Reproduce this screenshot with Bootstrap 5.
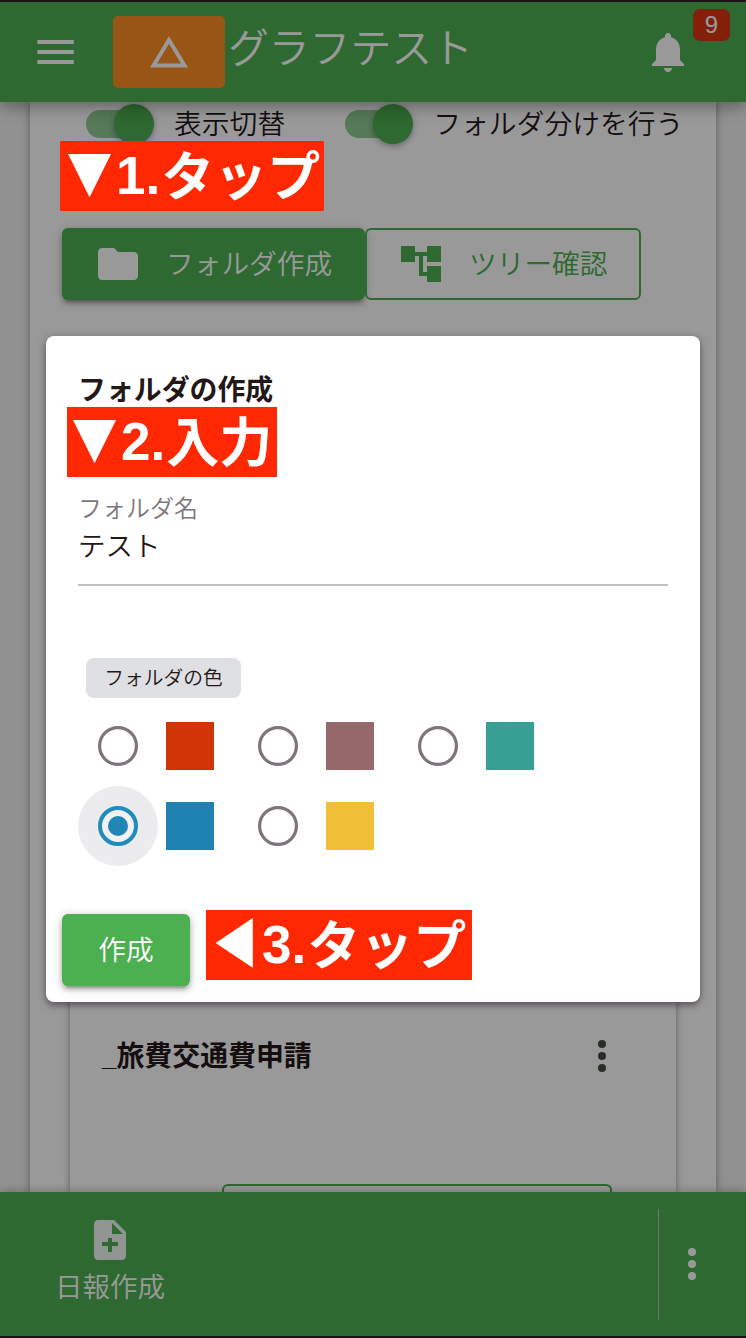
<!DOCTYPE html>
<html lang="ja">
<head>
<meta charset="utf-8">
<meta name="viewport" content="width=device-width, initial-scale=1">
<title>フォルダの作成</title>
<link href="https://cdn.jsdelivr.net/npm/bootstrap@5.3.0/dist/css/bootstrap.min.css" rel="stylesheet">
<style>
  :root { --brand: #4caf50; --shade: 0 2px 10px rgba(0,0,0,.25), 0 4px 4px rgba(0,0,0,.16), 0 6px 2px -4px rgba(0,0,0,.14); }
  body { font-family: "Liberation Sans", "Noto Sans CJK JP", sans-serif; font-size: 28px; line-height: 1.5; color: #231718; background: #f2f2f2; }
  .screen { height: 1338px; overflow: hidden; }
  .jp { font-family: "Noto Sans CJK JP", sans-serif; white-space: nowrap; }
  .thin { font-weight: 350; }
  svg { display: block; flex: none; }

  .topbar { height: 102px; background: var(--brand); border-top: 2px solid #2a2024; box-shadow: 0 4px 16px rgba(0,0,0,.38); z-index: 2; padding-left: 32px; }
  .logo-box { width: 112px; height: 72px; margin-left: 33px; border-radius: 5px; background: #ff8e26; }
  .app-title { font-size: 40.800px; font-weight: 350; margin: -13px 0 0 3px; }
  .bell-badge { top: 7px; right: 16px; width: 37px; height: 32px; border-radius: 7px; background: #dc3510; font: 24px/32px "Liberation Sans", sans-serif; text-align: center; }
  .bell { margin-right: 54px; }

  .sheet { margin: 0 30px; background: #fff; box-shadow: 0 0 8px rgba(0,0,0,.4); }
  .toggles { padding-left: 56px; height: 44px; }
  .toggles .jp { font-size: 27.800px; margin: -2px 0 0 20px; font-weight: 350; }
  .toggle { width: 68px; height: 40px; }
  .toggle + .jp + .toggle { margin-left: 60px; }
  .toggle::before { content: ""; position: absolute; left: 0; top: 6px; width: 60px; height: 28px; border-radius: 14px; background: #8fcb92; }
  .toggle::after { content: ""; position: absolute; right: 0; top: 0; width: 40px; height: 40px; border-radius: 50%; background: var(--brand); box-shadow: 0 2px 6px rgba(0,0,0,.35); }
  .act { height: 72px; border-radius: 6px; font-size: 27.700px; font-weight: 350; padding: 0 32px 2px; border: 0; }
  .act svg { position: relative; top: 1px; }
  .act-fill { background: var(--brand); color: #fff; box-shadow: var(--shade); }
  .act-fill.wide { width: 303px; }
  .act-line { width: 276px; padding: 0 30px 2px; color: var(--brand); border: 2px solid var(--brand); }
  .actions { margin: 82px 0 0 32px; }

  .entry { margin: 660px 40px 0; height: 232px; background: #fff; box-shadow: 0 0 7px rgba(0,0,0,.4); padding: 74px 64px 0 32px; }
  .entry b { font-size: 27.900px; }
  .entry b i { font: 700 26px "Liberation Sans", sans-serif; }
  .entry svg { position: relative; top: 1px; }
  .entry-btn { margin: 108px 0 0 120px; width: 390px; height: 60px; border: 2px solid var(--brand); border-radius: 6px; }

  .bottombar { height: 146px; background: var(--brand); border-bottom: 2px solid #2a2024; box-shadow: 0 -2px 8px rgba(0,0,0,.2); z-index: 2; color: #fff; }
  .bottombar .rule { width: 1px; height: 111px; background: #c9b9c9; margin-right: 9px; }
  .report { width: 220px; margin-top: -5px; }
  .report span { font-size: 27.500px; line-height: 44px; margin-top: -1px; }
  .more { margin-right: 30px; }

  .dimmer { inset: 0; background: rgba(0,0,0,.4); z-index: 5; }
  .dialog-box { top: 336px; left: 46px; width: 654px; height: 666px; z-index: 6; background: #fff; border-radius: 8px; padding: 31px 32px 16px; box-shadow: 0 2px 10px rgba(0,0,0,.3), 0 4px 4px rgba(60,30,60,.25); }
  .dialog-box h1 { font-size: 27.900px; font-weight: 700; line-height: 42px; margin: 0; }
  .field { margin-top: 80px; height: 97px; border-bottom: 2px solid #c0c0c0; }
  .field-label { font-size: 24px; line-height: 36px; color: #7d767d; font-weight: 350; }
  .field-value { font-size: 27.500px; line-height: 38px; font-weight: 350; }
  .color-tag { margin: 72px 0 0 8px; width: 155px; height: 40px; border-radius: 8px; background: #dfe0e4; font-size: 19.800px; line-height: 38px; font-weight: 350; }
  .choices { grid-template-columns: repeat(3, 160px); grid-auto-rows: 80px; margin-top: 8px; }
  .halo { width: 80px; height: 80px; border-radius: 50%; }
  .halo.on { background: #ececef; }
  .swatch { width: 48px; height: 48px; margin-left: 8px; }
  .create { width: 128px; margin: 48px 0 0 -16px; padding: 0 0 2px; }

  .callout-tag { z-index: 8; height: 70px; padding-left: 3px; background: #ff2802; color: #fff; font: 700 53px/70px "Liberation Sans", "Noto Sans CJK JP", sans-serif; white-space: nowrap; }
  .callout-tag .arrow { display: inline-block; width: 53px; font-family: "Noto Sans CJK JP", sans-serif; line-height: 1; transform: scaleX(.86); }
  .callout-tag .kana { position: relative; top: 2px; left: 1px; }
</style>
</head>
<body>
<div class="screen position-relative d-flex flex-column">
  <header class="topbar position-relative d-flex align-items-center text-white flex-shrink-0">
    <svg width="48" height="48" viewBox="0 0 24 24" fill="#fff"><path d="M2.700 6h18.200v2H2.700zM2.700 11h18.200v2H2.700zM2.700 16h18.200v2H2.700z"/></svg>
    <div class="logo-box d-flex align-items-center justify-content-center">
      <svg width="40" height="34" viewBox="0 0 40 34"><path d="M20 5 4.500 30.500h31z" fill="none" stroke="#fff" stroke-width="4"/></svg>
    </div>
    <div class="app-title jp">グラフテスト</div>
    <svg class="bell ms-auto" width="48" height="48" viewBox="0 0 24 24" fill="#fff"><path d="M12 22c1.100 0 2-.9 2-2h-4c0 1.100.9 2 2 2zm6-6v-5c0-3.070-1.630-5.640-4.500-6.320V4c0-.83-.67-1.500-1.500-1.500s-1.500.67-1.500 1.500v.68C7.640 5.360 6 7.920 6 11v5l-2 2v1h16v-1l-2-2z"/></svg>
    <span class="bell-badge position-absolute">9</span>
  </header>

  <main class="sheet flex-grow-1 overflow-hidden">
    <div class="toggles d-flex align-items-center">
      <span class="toggle position-relative"></span><span class="jp">表示切替</span>
      <span class="toggle position-relative"></span><span class="jp">フォルダ分けを行う</span>
    </div>
    <div class="actions d-flex">
      <button class="btn act act-fill wide jp d-flex align-items-center gap-4">
        <svg width="48" height="48" viewBox="0 0 24 24" fill="#fff"><path d="M10 4H4c-1.100 0-1.990.9-1.990 2L2 18c0 1.100.9 2 2 2h16c1.100 0 2-.9 2-2V8c0-1.100-.9-2-2-2h-8l-2-2z"/></svg>フォルダ作成
      </button>
      <button class="btn act act-line jp d-flex align-items-center gap-4">
        <svg width="48" height="48" viewBox="0 0 24 24" fill="#4caf50"><path d="M22 11V3h-7v3H9V3H2v8h7V8h2v10h4v3h7v-8h-7v3h-2V8h2v3z"/></svg>ツリー確認
      </button>
    </div>
    <section class="entry">
      <div class="d-flex align-items-center justify-content-between jp">
        <b><i>_</i>旅費交通費申請</b>
        <svg width="20" height="36" viewBox="0 0 20 36" fill="#444c43"><circle cx="10" cy="6" r="4"/><circle cx="10" cy="18" r="4"/><circle cx="10" cy="30" r="4"/></svg>
      </div>
      <div class="entry-btn"></div>
    </section>
  </main>

  <footer class="bottombar position-relative d-flex align-items-center flex-shrink-0">
    <div class="report d-flex flex-column align-items-center jp thin">
      <svg width="48" height="48" viewBox="0 0 24 24" fill="#fff" fill-opacity=".93"><path d="M14 2H6c-1.100 0-1.990.9-1.990 2L4 20c0 1.100.89 2 1.990 2H18c1.100 0 2-.9 2-2V8l-6-6zm2 13h-3v3h-2v-3H8v-2h3v-2h2v2h3v2zm-3-6V3.500L18.500 9H13z"/></svg>
      <span>日報作成</span>
    </div>
    <div class="rule ms-auto"></div>
    <svg width="48" height="48" viewBox="0 0 24 24" fill="#fff" class="more"><circle cx="12" cy="6" r="2"/><circle cx="12" cy="12" r="2"/><circle cx="12" cy="18" r="2"/></svg>
  </footer>

  <div class="dimmer position-absolute"></div>

  <section class="dialog-box position-absolute" role="dialog">
    <h1 class="jp">フォルダの作成</h1>
    <div class="field jp"><div class="field-label">フォルダ名</div><div class="field-value">テスト</div></div>
    <div class="color-tag jp text-center">フォルダの色</div>
    <div class="choices d-grid">
      <label class="d-flex align-items-center"><span class="halo d-flex align-items-center justify-content-center"><svg width="40" height="40"><circle cx="20" cy="20" r="18.400" fill="none" stroke="#7d747c" stroke-width="3.200"/></svg></span><span class="swatch" style="background:#d13405"></span></label>
      <label class="d-flex align-items-center"><span class="halo d-flex align-items-center justify-content-center"><svg width="40" height="40"><circle cx="20" cy="20" r="18.400" fill="none" stroke="#7d747c" stroke-width="3.200"/></svg></span><span class="swatch" style="background:#95686b"></span></label>
      <label class="d-flex align-items-center"><span class="halo d-flex align-items-center justify-content-center"><svg width="40" height="40"><circle cx="20" cy="20" r="18.400" fill="none" stroke="#7d747c" stroke-width="3.200"/></svg></span><span class="swatch" style="background:#379f94"></span></label>
      <label class="d-flex align-items-center"><span class="halo on d-flex align-items-center justify-content-center"><svg width="40" height="40"><circle cx="20" cy="20" r="18" fill="#f1f1f4" stroke="#208bbc" stroke-width="4"/><circle cx="20" cy="20" r="10" fill="#1f86b6"/></svg></span><span class="swatch" style="background:#1f83b2"></span></label>
      <label class="d-flex align-items-center"><span class="halo d-flex align-items-center justify-content-center"><svg width="40" height="40"><circle cx="20" cy="20" r="18.400" fill="none" stroke="#7d747c" stroke-width="3.200"/></svg></span><span class="swatch" style="background:#f1c037"></span></label>
    </div>
    <button class="btn act act-fill create jp">作成</button>
  </section>

  <div class="callout-tag position-absolute" style="left:60px;top:141px;width:264px"><span class="arrow">▼</span>1.<span class="kana">タップ</span></div>
  <div class="callout-tag position-absolute" style="left:67px;top:407px;width:210px;padding-left:1px"><span class="arrow">▼</span>2.<span class="kana">入力</span></div>
  <div class="callout-tag position-absolute" style="left:206px;top:910px;width:266px"><span class="arrow">◀</span>3.<span class="kana">タップ</span></div>
</div>
<script src="https://cdn.jsdelivr.net/npm/bootstrap@5.3.0/dist/js/bootstrap.bundle.min.js"></script>
</body>
</html>
